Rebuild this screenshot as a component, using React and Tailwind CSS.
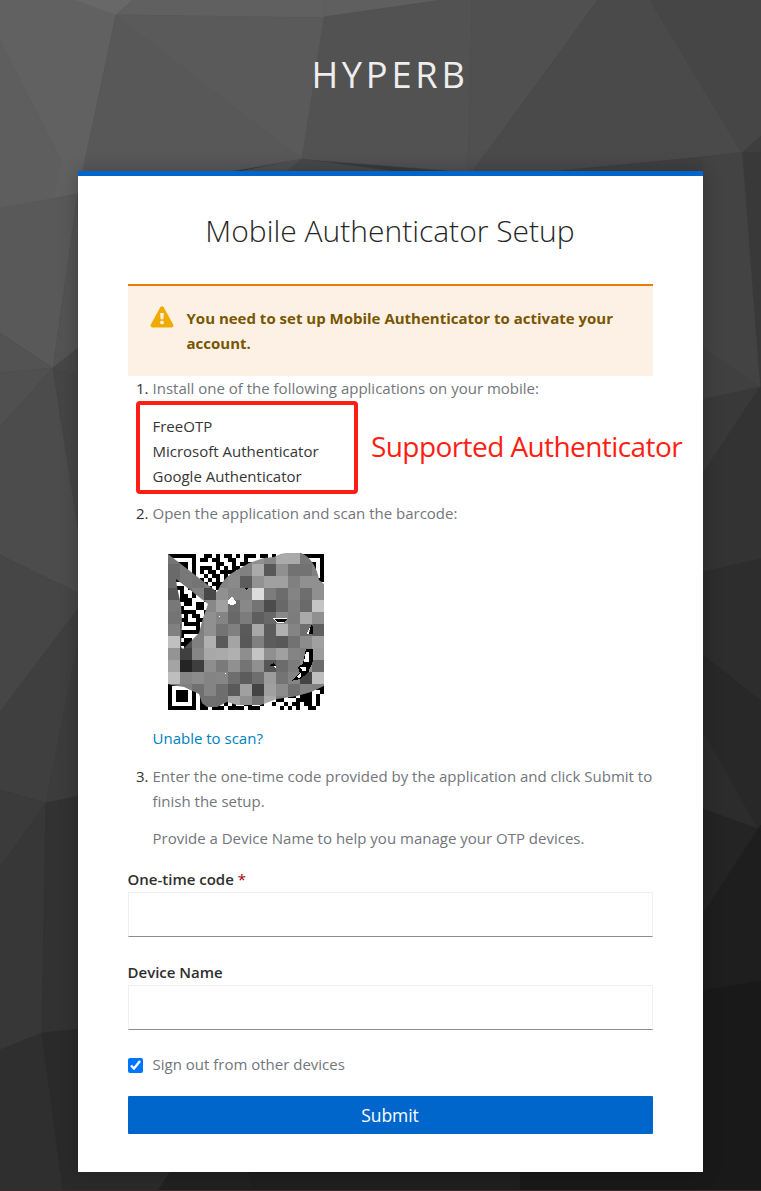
const SHAPES = [
  ['#616161', '0,0 75,0 116,15 83,170 78,194 0,208'],
  ['#5e5e5e', '0,40 61,160 53,204 0,208'],
  ['#686868', '75,0 133,0 116,15'],
  ['#606060', '133,0 324,0 324,18 116,15'],
  ['#5f5f5f', '324,0 442,0 324,17'],
  ['#585858', '116,15 324,18 302,159 238,170 78,194 83,170'],
  ['#5a5a5a', '116,15 324,18 302,159'],
  ['#525252', '324,17 442,0 472,0 468,172 302,159'],
  ['#505050', '472,0 598,0 473,172 468,172'],
  ['#4a4a4a', '598,0 650,0 742,153 553,171 473,171'],
  ['#464646', '650,0 761,0 761,136 742,153'],
  ['#505050', '302,159 238,172 286,172'],
  ['#484848', '302,159 286,172 398,172'],
  ['#404040', '742,153 553,172 703,200 755,240'],
  ['#3e3e3e', '742,153 761,136 761,153'],
  ['#393939', '742,153 761,152 761,387'],
  ['#595959', '0,208 78,194 53,368 0,333'],
  ['#535353', '0,333 53,368 0,373'],
  ['#535353', '78,194 78,348 53,368'],
  ['#505050', '0,373 53,368 0,427'],
  ['#474747', '53,368 78,348 78,376'],
  ['#4c4c4c', '0,427 53,368 78,528 78,593 0,555'],
  ['#454545', '53,368 78,376 78,528'],
  ['#464646', '0,555 78,593 78,609 0,712'],
  ['#3f3f3f', '0,712 78,609 78,645 46,803 0,790'],
  ['#3c3c3c', '78,645 78,796 46,803'],
  ['#3b3b3b', '0,790 46,803 0,867'],
  ['#373737', '0,867 46,803 42,1033 0,1050'],
  ['#323232', '46,803 78,796 78,1029 42,1033'],
  ['#2f2f2f', '0,1050 42,1033 63,1191 0,1191'],
  ['#2a2a2a', '42,1033 78,1029 180,1172 160,1191 63,1191'],
  ['#434343', '703,158 742,152 760,387 703,399'],
  ['#404040', '703,348 760,387 703,399'],
  ['#393939', '703,399 760,387 703,473'],
  ['#333333', '703,473 760,387 761,387 761,559 703,572'],
  ['#2d2d2d', '703,572 761,559 761,701 703,655'],
  ['#282828', '703,655 761,701 761,825 758,829 703,731'],
  ['#2c2c2c', '703,731 758,829 703,809'],
  ['#242424', '703,809 758,829 703,914'],
  ['#1e1e1e', '703,914 758,829 761,825 761,981 703,991'],
  ['#191919', '703,991 761,981 761,1191 520,1191 520,1172 703,1172'],
  ['#212121', '170,1172 250,1172 254,1191 158,1191'],
  ['#1f1f1f', '250,1172 520,1172 520,1191 254,1191'],
];

const MOSAIC = [
  '74 74 74 78 80 84 86 8f 85 aa aa 77 77',
  '6a 78 78 88 88 88 80 aa 58 90 72 72 80',
  '6a 78 74 7c 84 8a 5c 92 a0 a0 80 90 90',
  '58 70 80 48 90 84 84 dc 7c 6c 84 6e 90',
  '78 80 80 88 a0 6c 88 74 4c 68 7e 6a c4',
  '74 74 80 90 84 68 7c 5e 68 88 7c aa 90',
  '80 60 80 90 74 80 5a a8 5c b0 84 6e 60',
  'c0 50 80 b0 5a a4 58 80 5c 58 72 8c a0',
  '94 40 86 a8 aa b0 8e c4 90 a0 84 80 9c',
  'a4 24 3e 8e 7a 90 74 90 56 6c 7c 90 6c',
  'be 86 8c 84 86 6e 5c 6e 9c 74 84 44 be',
  '80 80 70 84 6e 5a a0 44 a0 8c 70 84 80',
  '70 70 70 70 6e a6 90 74 aa 80 80 80 80',
].map((row) => row.split(' '));

const MODULES = [
  'XXXXXXX..XX.X.XX.X.XXX.XX.X.X.X.XXXXXXX',
  'X.....X.XX.XX..XX..X....XX.XX...X.....X',
  'X.XXX.X.....XX..X.XXX..X.X.X..X.X.XXX.X',
  'X.XXX.X.XXX.X.X.XX..XX..X..XX...X.XXX.X',
  'X.XXX.X.X.XX.XXXX.XX.X.XX.X...X.X.XXX.X',
  'X.....X..X.XX.X.XXX..XX..X.XX...X.....X',
  'XXXXXXX.X.X.X.X.X.X.X.X.X.X.X.X.XXXXXXX',
  '........XX.XXX..XX.X..XX..X.XX.........',
  '..XX.X.XX.X.XX.XX.XX.X.X..XX.X.XXX..X.X',
  '...X..XX..XX.XX..X..X.XX..X.X.XX.X.X.XX',
  '...XX.X.XX..XX.X...X.X.XX.X.X.X.X.X..XX',
  '...XXX...XXX.X..XX.X.X.XX.X..XX.X.X..XX',
  '....XX.XX..XX.XX..X.X.XX.X.X.X.XX.X.X.X',
  '...X...XX.X.XX.X.X.XX.XX.X..XX..XXX.X.X',
  '...XXXX..XX.X.XX.X.X.XX.X.XX.X.XX.X..XX',
  '....X.XX.X..XX.X.X.XX.X.XX.X.XX.X..X.XX',
  '...XX..XXXX.X.XX.X.X.XX.X.XX.X.XX.X..XX',
  '....XXXX..X.XX.X.X.XX.X.XX.X.XX.X..X.XX',
  '.......X.XX.X.XX.X.X.XX.X.XX.X.XX.X..XX',
  '...XXXXX.X..XX.X.X.XX.X.XX.X.XX.X..X.XX',
  '...X.......XX.XX.X.X.XX.X.XX.X.XX.X..XX',
  '....XX.XX.X.XX.X.X.XX.X.XX.X.XX.X.XX.XX',
  '...XXXX.X...X.XX.X.X.XX.X.XX.X.XX.X..XX',
  '....X.XX.X..XX.X.X.XX.X.XX.X.XX.X..X.XX',
  '...X.XX.X.X.X.XX.X.X.XX.X.XX.X.X..X..XX',
  '....X.XX.X..XX.X.X.XX.X.XX.X.XX..X.X.XX',
  '..XX.X.XX.X.X.XX.X.X.XX.X.XX.X.XX...XXX',
  '....X.XX.X..XX.X.X.XX.X.XX.X.XXXXX.X.XX',
  '..XX.X.XX.X.X.XX.X.X.XX.X.XX.X.X.XXX.XX',
  '....X.XX.X..XX.X.X.XX.X.XX.X.XX..X.X.XX',
  '..XX.X.XX.X.X.XX.X.X.XX.X.XX.X.XX.X..XX',
  '........XX..XX.X.X.XX.X.XX.X.XX.X..X.XX',
  'XXXXXXX.X.X.X.XX.X.X.XX.X.XX.X.XX.X..XX',
  'X.....X.XX..XX.X.X.XX.X.XX.X.XX.X..X.XX',
  'X.XXX.X.X.X.X.XX.X.X.XX.X.XX.X.XX.XX..X',
  'X.XXX.X.X.XXX..X.X.XX.X.XX.X..XX.XXX.X.',
  'X.XXX.X.XX.X.X.X..X.X...X..XX...XXXX.X.',
  'X.....X.XX..X.X.X..XX..X..X..X.XX.XX.X.',
  'XXXXXXX.XX.XXX.XXXX.XXX.....X.X.X..XX...',
];

const COVER =
  'M0 0 L49 38 Q54 26 64 19 L81 9 L96 4 L106 3 Q113 -1 119 -1 L133 -1 Q140 2 144 8 Q150 17 151 26 L156 30 V132 L143 138 L129 142 L109 145 L93 151 H69 L59 148 L49 153 H39 L34 149 L31 140 L16 133 L3 131 L0 130 Z ' +
  'M8 25 L9 33 L13 51 L14 69 L13 93 L15 95 L31 79 L35 64 L40 50 Z';

function Backdrop() {
  return (
    <svg
      className="absolute inset-0 -z-10 h-[1191px] w-[761px]"
      viewBox="0 0 761 1191"
      aria-hidden="true"
    >
      <rect width="761" height="1191" fill="#3a3a3a" />
      {SHAPES.map(([fill, points], i) => (
        <polygon key={i} points={points} fill={fill} stroke={fill} strokeWidth="0.6" />
      ))}
      <rect y="1190" width="761" height="1" fill="#382b2c" />
    </svg>
  );
}

function Barcode() {
  return (
    <svg className="block h-[158px] w-[156px]" viewBox="0 -2 156 158" aria-hidden="true">
      <defs>
        <clipPath id="cover">
          <path d={COVER} clipRule="evenodd" />
        </clipPath>
      </defs>
      <g shapeRendering="crispEdges">
        {MODULES.map((row, y) =>
          [...row].map((c, x) =>
            c === 'X' ? (
              <rect key={`${x}-${y}`} x={x * 4} y={y * 4} width="4" height="4" fill="#000" />
            ) : null
          )
        )}
      </g>
      <g clipPath="url(#cover)" shapeRendering="crispEdges">
        {MOSAIC.map((row, y) =>
          row.map((v, x) => (
            <rect
              key={`${x}-${y}`}
              x={x * 12}
              y={y * 12 - 2}
              width="12"
              height={y === 12 ? 14 : 12}
              fill={`#${v}${v}${v}`}
            />
          ))
        )}
      </g>
      <g shapeRendering="crispEdges">
        <path d="M64 42 l4 6 v2 l-4 1 l-4 -1 v-3 z" fill="#fff" />
        <path d="M105 64 h14 l-3 5 h-7 z" fill="#fff" />
        <path d="M106 65 h13 l-3 3 h-7 z" fill="#000" />
        <path d="M77 34 h3 l-1 3 z" fill="#000" />
        <path d="M51 62 l1 -1 v1 l-1 1 z" fill="#fff" />
        <path d="M143 71 l2 2 v7 h-4 z" fill="#000" />
        <path d="M142 73 l-3 6 v1 h2 z" fill="#fff" />
        <path d="M102 111 l4 -2 l2 3 h-6 z" fill="#000" />
        <path d="M105 112 h3 v2 z" fill="#fff" />
        <path d="M138 95 h7 v12 l-5 12 l-8 6 l-9 2 l9 -8 l-2 -6 l5 -3 z" fill="#000" />
        <path d="M138 98 h3 v10 h-5 z M131 113 l7 0 v4 h-4 v-2 z M129 122 l4 -3 v4 l-3 1 z" fill="#fff" />
        <rect x="57" y="119" width="1" height="1" fill="#fff" />
      </g>
    </svg>
  );
}

function WarningIcon() {
  return (
    <svg className="mt-[-0.5px] h-[22px] w-6 shrink-0" viewBox="0 0 24 22" aria-hidden="true">
      <path
        d="M10.4 1.1c.7-1.2 2.5-1.2 3.2 0l9.6 17.5c.7 1.2-.2 2.9-1.6 2.9H2.4C1 21.500.1 19.800.8 18.600z"
        fill="#f0ab00"
      />
      <path d="M10.200 7h3.600l-.4 6.200h-2.800z" fill="#fdf1e6" />
      <rect x="10.200" y="14.700" width="3.600" height="3.600" rx="1.400" fill="#fdf1e6" />
    </svg>
  );
}

function Field({ label, required }) {
  return (
    <label className="block">
      <span className="-ml-[0.5px] block font-semibold text-[#2e2e2e]">
        {label}
        {required && <span className="font-normal text-[#a30000]"> *</span>}
      </span>
      <input
        type="text"
        className="block h-[45px] w-full border border-[#f0f0f0] border-b-[#8a8d90] bg-white px-2 outline-none"
      />
    </label>
  );
}

export default function App() {
  return (
    <div className="relative isolate h-[1191px] w-[761px] overflow-hidden pl-[78px] font-['Open_Sans','Noto_Sans',sans-serif] text-[15px] leading-[25px] text-[#72767b]">
      <Backdrop />
      <header className="flex h-[171px] w-[624px] items-start justify-center pt-[49px]">
        <div className="text-[36.25px] leading-[50px] tracking-[3.75px] text-[#eeeeee]">HYPERB</div>
      </header>
      <main className="h-[1001px] w-[625px] border-t-[5px] border-[#0066cc] bg-white px-[50px] shadow-[0_0_18px_rgba(0,0,0,0.24)]">
        <h1 className="-ml-px pt-[35px] text-center text-[30px] leading-[40px] font-light text-[#262626]">
          Mobile Authenticator Setup
        </h1>
        <div className="mt-[33px] flex h-[92px] border-t-2 border-[#ec7a08] bg-[#fdf1e6] pt-5 pl-[22px]">
          <WarningIcon />
          <p className="ml-[12.5px] w-[440px] font-bold text-[#795600]">
            You need to set up Mobile Authenticator to activate your account.
          </p>
        </div>
        <ol className="pl-[24.5px]">
          <li className="relative">
            <span className="absolute right-full mr-1 text-[#333333]">1.</span>
            <p>Install one of the following applications on your mobile:</p>
            <div className="relative mt-[13px] text-[#363636]">
              <p>FreeOTP</p>
              <p>Microsoft Authenticator</p>
              <p>Google Authenticator</p>
              <div className="absolute -top-[13px] -left-[16.5px] h-[93px] w-[222px] rounded-[4px] border-4 border-[#fe1f14]" />
              <div className="absolute top-[12px] left-[218.5px] text-[28px] leading-10 tracking-[-0.58px] whitespace-nowrap text-[#fe1f14]">
                Supported Authenticator
              </div>
            </div>
          </li>
          <li className="relative mt-3">
            <span className="absolute right-full mr-1 text-[#333333]">2.</span>
            <p>Open the application and scan the barcode:</p>
            <div className="pt-[26px] pb-4 pl-[15.5px]">
              <Barcode />
            </div>
            <a className="block text-[#0080bf]">Unable to scan?</a>
          </li>
          <li className="relative mt-[13px]">
            <span className="absolute right-full mr-1 text-[#333333]">3.</span>
            <p>Enter the one-time code provided by the application and click Submit to finish the setup.</p>
            <p className="mt-3">Provide a Device Name to help you manage your OTP devices.</p>
          </li>
        </ol>
        <form className="mt-4">
          <Field label="One-time code" required />
          <div className="mt-[23px]">
            <Field label="Device Name" />
          </div>
          <label className="mt-[22px] flex items-center">
            <input type="checkbox" defaultChecked className="mt-px mr-[9.5px] size-[15px] accent-[#0075ff]" />
            Sign out from other devices
          </label>
          <button
            type="button"
            className="mt-[19px] h-[38px] w-full rounded-[1px] bg-[#0066cc] pr-px text-[17.5px] font-medium tracking-[-0.1px] text-white"
          >
            Submit
          </button>
        </form>
      </main>
    </div>
  );
}
